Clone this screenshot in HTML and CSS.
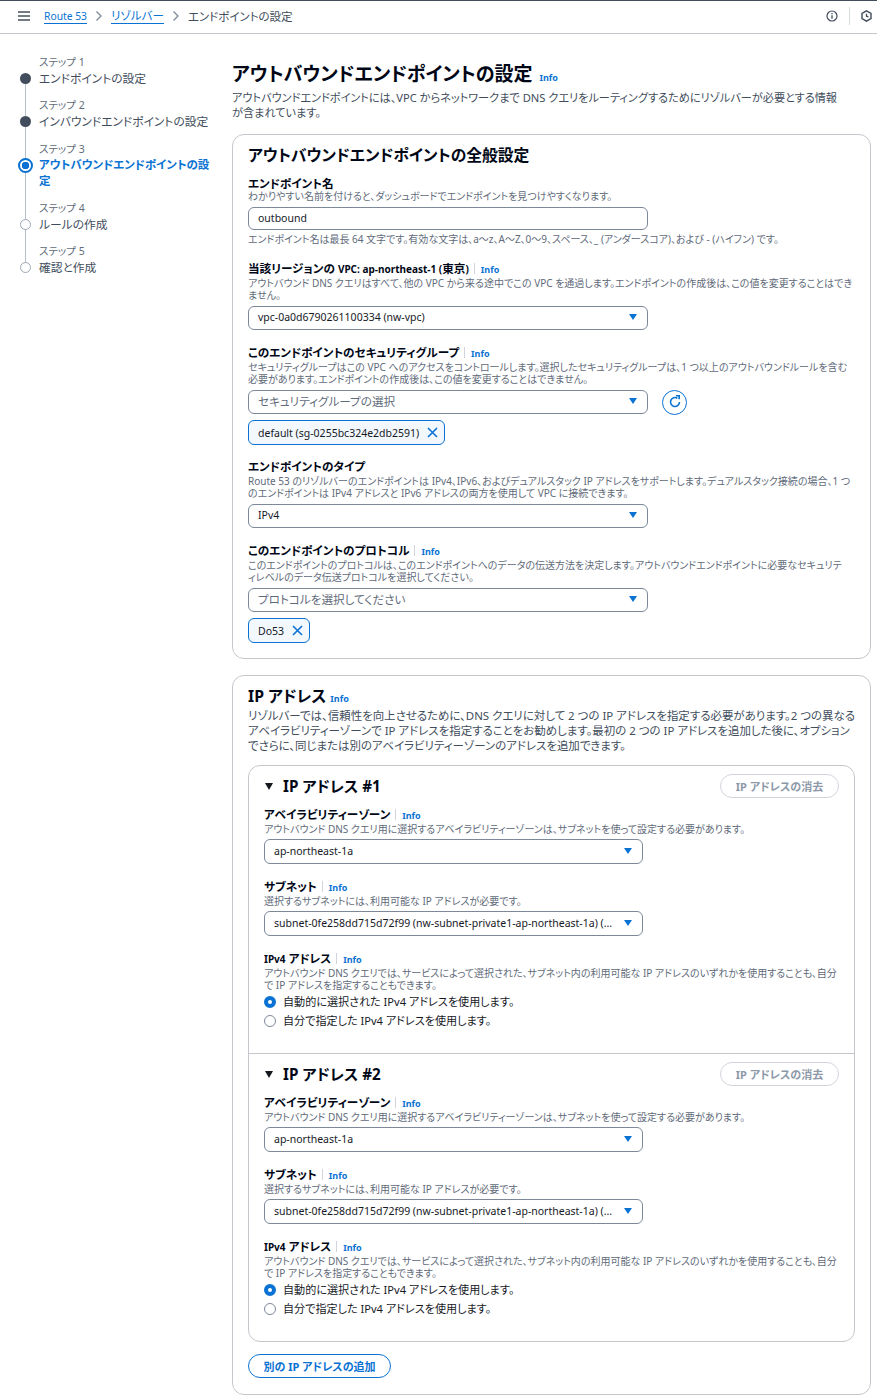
FILE: index.html
```html
<!DOCTYPE html>
<html lang="ja">
<head>
<meta charset="utf-8">
<title>アウトバウンドエンドポイントの設定</title>
<link rel="stylesheet" href="styles.css">
</head>
<body>
<header class="topbar">
  <svg class="menu" width="12" height="10" viewBox="0 0 12 10"><path d="M0 1h12M0 5h12M0 9h12" stroke="#414d5c" stroke-width="1.400"/></svg>
  <nav class="crumbs">
    <a class="lat-link" href="#">Route 53</a>
    <svg class="chev" width="8" height="12" viewBox="0 0 8 12"><path d="M1.500 1.500 6 6l-4.500 4.500" fill="none" stroke="#7d8998" stroke-width="1.300"/></svg>
    <a href="#">リゾルバー</a>
    <svg class="chev" width="8" height="12" viewBox="0 0 8 12"><path d="M1.500 1.500 6 6l-4.500 4.500" fill="none" stroke="#7d8998" stroke-width="1.300"/></svg>
    <span>エンドポイントの設定</span>
  </nav>
  <div class="tools">
    <svg width="12" height="12" viewBox="0 0 12 12"><circle cx="6" cy="6" r="5" fill="none" stroke="#414d5c" stroke-width="1.200"/><path d="M6 5.300v3.400M6 3v1.300" stroke="#414d5c" stroke-width="1.300"/></svg>
    <i class="tool-sep"></i>
    <svg width="11" height="12" viewBox="0 0 11 12"><path d="M5.500.8 10 3.400v5.200l-4.500 2.600L1 8.600V3.400z" fill="none" stroke="#414d5c" stroke-width="1.400"/><path d="M5.500 3.800v2.400l2 .8" fill="none" stroke="#414d5c" stroke-width="1.300"/></svg>
  </div>
</header>

<div class="layout">
  <aside class="steps">
    <div class="step done"><div class="step-num">ステップ 1</div><div class="step-title">エンドポイントの設定</div></div>
    <div class="step done wide"><div class="step-num">ステップ 2</div><div class="step-title">インバウンドエンドポイントの設定</div></div>
    <div class="step active"><div class="step-num">ステップ 3</div><div class="step-title">アウトバウンドエンドポイントの設<br>定</div></div>
    <div class="step todo"><div class="step-num">ステップ 4</div><div class="step-title">ルールの作成</div></div>
    <div class="step todo last"><div class="step-num">ステップ 5</div><div class="step-title">確認と作成</div></div>
  </aside>

  <main class="main">
    <div class="page-head">
      <h1>アウトバウンドエンドポイントの設定 <a class="info" href="#">Info</a></h1>
      <p>アウトバウンドエンドポイントには、VPC からネットワークまで DNS クエリをルーティングするためにリゾルバーが必要とする情報<br>が含まれています。</p>
    </div>

    <section class="card">
      <h2 class="card-title">アウトバウンドエンドポイントの全般設定</h2>

      <div class="field first">
        <div class="label">エンドポイント名</div>
        <div class="desc">わかりやすい名前を付けると、ダッシュボードでエンドポイントを見つけやすくなります。</div>
        <div class="control short"><span>outbound</span></div>
        <div class="desc constraint">エンドポイント名は最長 64 文字です。有効な文字は、a～z、A～Z、0～9、スペース、_ (アンダースコア)、および - (ハイフン) です。</div>
      </div>

      <div class="field after-short">
        <div class="label">当該リージョンの <span class="lat">VPC: ap-northeast-1 (</span>東京<span class="lat">)</span><i class="bar"></i><a class="info" href="#">Info</a></div>
        <div class="desc">アウトバウンド DNS クエリはすべて、他の VPC から来る途中でこの VPC を通過します。エンドポイントの作成後は、この値を変更することはでき<br>ません。</div>
        <div class="control select"><span>vpc-0a0d6790261100334 (nw-vpc)</span><i class="caret"></i></div>
      </div>

      <div class="field">
        <div class="label">このエンドポイントのセキュリティグループ<i class="bar"></i><a class="info" href="#">Info</a></div>
        <div class="desc">セキュリティグループはこの VPC へのアクセスをコントロールします。選択したセキュリティグループは、1 つ以上のアウトバウンドルールを含む<br>必要があります。エンドポイントの作成後は、この値を変更することはできません。</div>
        <div class="control-row">
          <div class="control select"><span class="placeholder">セキュリティグループの選択</span><i class="caret"></i></div>
          <button class="refresh" aria-label="更新"><svg width="14" height="14" viewBox="0 0 14 14"><path d="M11.500 7A4.500 4.500 0 1 1 9.400 3.200" fill="none" stroke="#0972d3" stroke-width="1.600"/><path d="M8 .8h3.200V4.300" fill="none" stroke="#0972d3" stroke-width="1.600"/></svg></button>
        </div>
        <div class="token">default (sg-0255bc324e2db2591)<svg width="11" height="11" viewBox="0 0 11 11"><path d="m1 1 9 9M10 1l-9 9" stroke="#0972d3" stroke-width="1.600"/></svg></div>
      </div>

      <div class="field after-token">
        <div class="label">エンドポイントのタイプ</div>
        <div class="desc">Route 53 のリゾルバーのエンドポイントは IPv4、IPv6、およびデュアルスタック IP アドレスをサポートします。デュアルスタック接続の場合、1 つ<br>のエンドポイントは IPv4 アドレスと IPv6 アドレスの両方を使用して VPC に接続できます。</div>
        <div class="control select"><span>IPv4</span><i class="caret"></i></div>
      </div>

      <div class="field">
        <div class="label">このエンドポイントのプロトコル<i class="bar"></i><a class="info" href="#">Info</a></div>
        <div class="desc">このエンドポイントのプロトコルは、このエンドポイントへのデータの伝送方法を決定します。アウトバウンドエンドポイントに必要なセキュリテ<br>ィレベルのデータ伝送プロトコルを選択してください。</div>
        <div class="control select"><span class="placeholder">プロトコルを選択してください</span><i class="caret"></i></div>
        <div class="token">Do53<svg width="11" height="11" viewBox="0 0 11 11"><path d="m1 1 9 9M10 1l-9 9" stroke="#0972d3" stroke-width="1.600"/></svg></div>
      </div>
    </section>

    <section class="card card-ip">
      <h2 class="card-title">IP アドレス <a class="info" href="#">Info</a></h2>
      <p class="card-desc">リゾルバーでは、信頼性を向上させるために、DNS クエリに対して 2 つの IP アドレスを指定する必要があります。2 つの異なる<br>アベイラビリティーゾーンで IP アドレスを指定することをお勧めします。最初の 2 つの IP アドレスを追加した後に、オプション<br>でさらに、同じまたは別のアベイラビリティーゾーンのアドレスを追加できます。</p>

      <div class="inner">
        <div class="ip-block">
          <div class="ip-head">
            <h3><i class="tri"></i>IP アドレス #1</h3>
            <span class="btn-disabled">IP アドレスの消去</span>
          </div>
          <div class="ip-field first">
            <div class="label">アベイラビリティーゾーン<i class="bar"></i><a class="info" href="#">Info</a></div>
            <div class="desc">アウトバウンド DNS クエリ用に選択するアベイラビリティーゾーンは、サブネットを使って設定する必要があります。</div>
            <div class="control select"><span>ap-northeast-1a</span><i class="caret"></i></div>
          </div>
          <div class="ip-field">
            <div class="label">サブネット<i class="bar"></i><a class="info" href="#">Info</a></div>
            <div class="desc">選択するサブネットには、利用可能な IP アドレスが必要です。</div>
            <div class="control select"><span>subnet-0fe258dd715d72f99 (nw-subnet-private1-ap-northeast-1a) (...</span><i class="caret"></i></div>
          </div>
          <div class="ip-field">
            <div class="label"><span class="lat">IPv4</span> アドレス<i class="bar"></i><a class="info" href="#">Info</a></div>
            <div class="desc">アウトバウンド DNS クエリでは、サービスによって選択された、サブネット内の利用可能な IP アドレスのいずれかを使用することも、自分<br>で IP アドレスを指定することもできます。</div>
            <div class="radio on">自動的に選択された IPv4 アドレスを使用します。</div>
            <div class="radio">自分で指定した IPv4 アドレスを使用します。</div>
          </div>
        </div>
        <div class="ip-block second">
          <div class="ip-head">
            <h3><i class="tri"></i>IP アドレス #2</h3>
            <span class="btn-disabled">IP アドレスの消去</span>
          </div>
          <div class="ip-field first">
            <div class="label">アベイラビリティーゾーン<i class="bar"></i><a class="info" href="#">Info</a></div>
            <div class="desc">アウトバウンド DNS クエリ用に選択するアベイラビリティーゾーンは、サブネットを使って設定する必要があります。</div>
            <div class="control select"><span>ap-northeast-1a</span><i class="caret"></i></div>
          </div>
          <div class="ip-field">
            <div class="label">サブネット<i class="bar"></i><a class="info" href="#">Info</a></div>
            <div class="desc">選択するサブネットには、利用可能な IP アドレスが必要です。</div>
            <div class="control select"><span>subnet-0fe258dd715d72f99 (nw-subnet-private1-ap-northeast-1a) (...</span><i class="caret"></i></div>
          </div>
          <div class="ip-field">
            <div class="label"><span class="lat">IPv4</span> アドレス<i class="bar"></i><a class="info" href="#">Info</a></div>
            <div class="desc">アウトバウンド DNS クエリでは、サービスによって選択された、サブネット内の利用可能な IP アドレスのいずれかを使用することも、自分<br>で IP アドレスを指定することもできます。</div>
            <div class="radio on">自動的に選択された IPv4 アドレスを使用します。</div>
            <div class="radio">自分で指定した IPv4 アドレスを使用します。</div>
          </div>
        </div>
      </div>
      <button class="btn-add">別の IP アドレスの追加</button>
    </section>
  </main>
</div>
</body>
</html>
```

FILE: styles.css
```css
*, *::before, *::after { box-sizing: border-box; }
html, body { margin: 0; padding: 0; }
body {
  width: 877px;
  height: 1400px;
  overflow: hidden;
  background: #fff;
  color: #16191f;
  font-family: "Noto Sans", "Noto Sans CJK JP", sans-serif;
  font-feature-settings: "palt";
  font-size: 11px;
}
a { color: #0972d3; text-decoration: none; }
h1, h2, h3, p { margin: 0; }

.topbar {
  height: 34px;
  border-top: 1px solid #414d5c;
  border-bottom: 1px solid #c6c6cd;
  display: flex;
  align-items: center;
  padding: 0 5px 2px 18px;
}
.menu { flex: none; }
.crumbs {
  display: flex;
  align-items: center;
  margin-left: 14px;
  gap: 8px;
  font-size: 11.500px;
  color: #414d5c;
}
.crumbs a { border-bottom: 1px solid #0972d3; line-height: 14px; }
.crumbs .lat-link { font-size: 10.300px; }
.tools { margin-left: auto; display: flex; align-items: center; gap: 11px; }
.tool-sep { width: 1px; height: 18px; background: #d5dbdb; }

.layout { display: flex; align-items: flex-start; }
.steps { width: 232px; flex: none; padding: 20px 14px 0 39px; }
.step { position: relative; padding-bottom: 11px; color: #5f6b7a; }
.step.wide { padding-bottom: 12px; }
.step-num { font-size: 10.500px; line-height: 16px; color: #5f6b7a; }
.step-title { font-size: 11.750px; line-height: 16px; color: #414d5c; }
.step::before {
  content: "";
  position: absolute;
  left: -14px;
  top: 23px;
  bottom: -19px;
  width: 1px;
  background: #b6bec9;
}
.step.last::before { display: none; }
.step::after {
  content: "";
  position: absolute;
  left: -19px;
  top: 19px;
  width: 11px;
  height: 11px;
  border-radius: 50%;
}
.step.done::after { background: #414d5c; }
.step.todo::after { background: #fff; border: 1.500px solid #9ba7b6; }
.step.active .step-title { color: #0972d3; font-weight: 700; font-size: 11.500px; }
.step.active::after {
  left: -21px;
  top: 17px;
  width: 15px;
  height: 15px;
  background: radial-gradient(circle, #0972d3 0 3.500px, #fff 4px);
  border: 2px solid #0972d3;
}

.main { width: 639px; padding-top: 28px; }
.page-head { margin-bottom: 14px; }
h1 { font-size: 19px; height: 28px; line-height: 24px; font-weight: 700; color: #000716; }
h1 .info { margin-left: 2px; }
.page-head p { font-size: 11.170px; line-height: 15px; color: #414d5c; white-space: nowrap; }
.info { font-size: 9px; font-weight: 700; color: #0972d3; }
.bar { display: inline-block; width: 1px; height: 11px; background: #d1d5db; margin: 0 6px 0 5px; vertical-align: -1px; }

.card {
  border: 1px solid #c6c6cd;
  border-radius: 12px;
  padding: 10px 15px 15px;
  background: #fff;
}
.card-ip { margin-top: 16px; height: 720px; }
.card-title { font-size: 15.800px; height: 20px; line-height: 20px; font-weight: 700; color: #000716; }
.card-desc { font-size: 11.460px; line-height: 15px; color: #414d5c; margin-top: 2px; white-space: nowrap; }

.field { margin-top: 16px; }
.field.first { margin-top: 11px; }
.field.first .label { height: 14px; line-height: 15px; }
.field.after-short { margin-top: 17px; }
.field.after-token { margin-top: 15px; }
.label { font-size: 11.600px; height: 15px; line-height: 13px; font-weight: 700; color: #000716; white-space: nowrap; }
.lat { font-size: 10px; }
.desc { font-size: 10px; line-height: 12px; color: #5f6b7a; white-space: nowrap; }
.constraint { margin-top: 3px; }
.control {
  margin-top: 5px;
  width: 400px;
  height: 24px;
  border: 1px solid #7d8998;
  border-radius: 6px;
  display: flex;
  align-items: center;
  justify-content: space-between;
  padding: 0 10px 2px 9px;
  font-size: 10.500px;
  color: #16191f;
  white-space: nowrap;
  background: #fff;
}
.control.short { height: 23px; }
.placeholder { color: #5f6b7a; font-size: 11.600px; }
.caret {
  width: 0;
  height: 0;
  border-left: 4.500px solid transparent;
  border-right: 4.500px solid transparent;
  border-top: 6.500px solid #0972d3;
}
.control-row { display: flex; align-items: center; gap: 14px; margin-top: 5px; height: 24px; }
.control-row .control { margin-top: 0; }
.refresh {
  width: 25px;
  height: 25px;
  flex: none;
  padding: 0;
  border: 1.500px solid #0972d3;
  border-radius: 50%;
  background: #fff;
  display: flex;
  align-items: center;
  justify-content: center;
}
.token {
  margin-top: 6px;
  display: flex;
  width: fit-content;
  align-items: center;
  gap: 8px;
  height: 25px;
  padding: 0 6px 0 9px;
  border: 1px solid #0972d3;
  border-radius: 6px;
  background: #f2f8fd;
  font-size: 10.500px;
  color: #16191f;
}

.inner {
  margin-top: 12px;
  border: 1px solid #c6c6cd;
  border-radius: 12px;
  height: 577px;
}
.ip-block { padding: 6px 15px 0; height: 287px; }
.ip-block.second { border-top: 1px solid #c6c6cd; height: 288px; }
.ip-head { display: flex; align-items: center; justify-content: space-between; height: 27px; }
.ip-head h3 { font-size: 15.200px; font-weight: 700; color: #000716; display: flex; align-items: center; padding-bottom: 2px; }
.tri {
  width: 0;
  height: 0;
  border-left: 4.500px solid transparent;
  border-right: 4.500px solid transparent;
  border-top: 7px solid #16191f;
  margin: 4px 10px 0 1px;
}
.btn-disabled {
  width: 119px;
  height: 24px;
  border: 1.500px solid #d1d5db;
  border-radius: 13px;
  display: flex;
  align-items: center;
  justify-content: center;
  font-size: 11px;
  font-weight: 700;
  color: #8d99a8;
}
.ip-field { margin-top: 16px; }
.ip-field.first { margin-top: 9px; }
.ip-field .control { width: 379px; height: 25px; margin-top: 4px; }
.radio {
  position: relative;
  padding-left: 19px;
  font-size: 11.100px;
  line-height: 16px;
  color: #16191f;
  margin-top: 3px;
}
.radio::before {
  content: "";
  position: absolute;
  left: 0;
  top: 2px;
  width: 12px;
  height: 12px;
  border: 1px solid #7d8998;
  border-radius: 50%;
  background: #fff;
}
.radio.on::before { border: 4px solid #0972d3; }
.btn-add {
  display: block;
  margin-top: 12px;
  width: 143px;
  height: 24px;
  border: 1.500px solid #0972d3;
  border-radius: 13px;
  background: #fff;
  color: #0972d3;
  font-family: inherit;
  font-feature-settings: inherit;
  font-size: 11px;
  font-weight: 700;
  padding: 0;
}
```
